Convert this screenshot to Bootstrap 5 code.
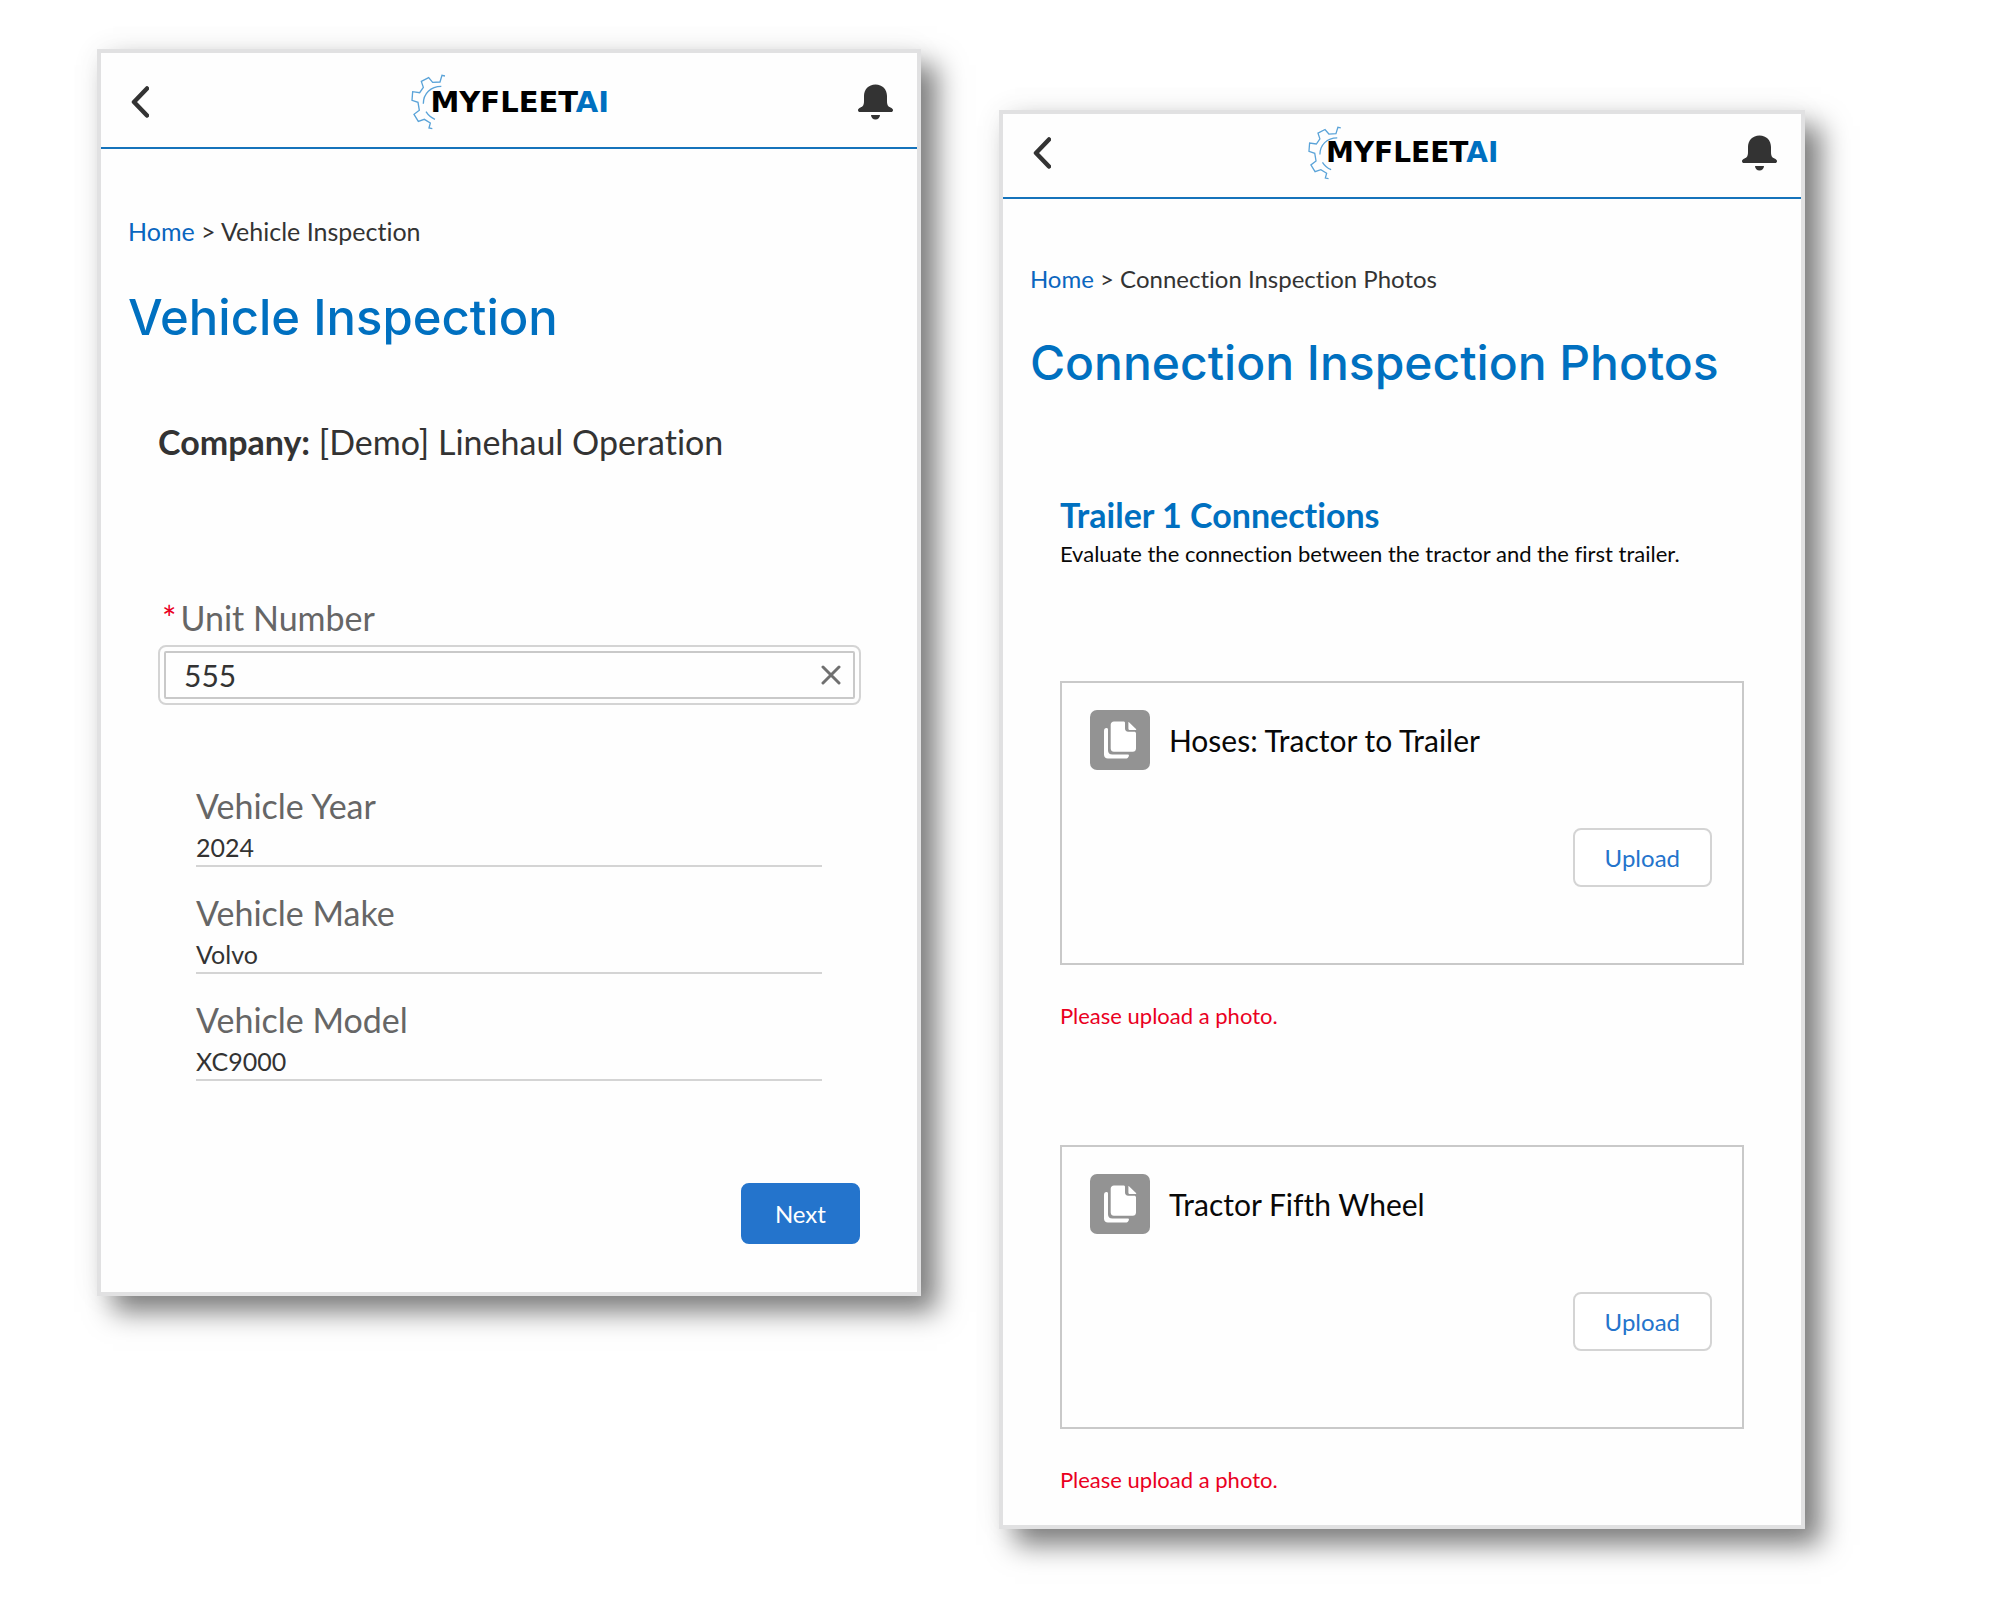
<!DOCTYPE html>
<html lang="en">
<head>
<meta charset="utf-8">
<meta name="viewport" content="width=device-width, initial-scale=1">
<title>MyFleetAI inspection screens</title>
<link href="https://cdn.jsdelivr.net/npm/bootstrap@5.3.0/dist/css/bootstrap.min.css" rel="stylesheet">
<style>
  body { font-family: Lato, "Liberation Sans", sans-serif; font-variant-ligatures: none; color: #333; background: #fff; }
  a { color: #0a66bf; text-decoration: none; }
  .stage { padding: 49px 195px 70px 97px; gap: 78px; }
  .screen { background: #fefefe; border: 4px solid #e1e1e2; box-shadow: 16px 16px 26px rgba(0,0,0,.5), 0 0 30px rgba(0,0,0,.05); min-width: 0; }
  .screen-vehicle { flex: 824 1 0; --crumb: 25px; --heading: 49px; --mark: 29px; --gear: 56px; }
  .screen-photos { flex: 806 1 0; margin-top: 61px; --crumb: 24px; --heading: 48px; --mark: 28px; --gear: 54px; }
  .topbar { height: 96px; padding: 4px 24px 0 30px; border-bottom: 2px solid #1573bb; }
  .screen-photos .topbar { height: 85px; padding-top: 0; padding-bottom: 6px; }
  .side { flex: 1 1 0; }
  .wordmark { font: 700 var(--mark)/1 "DejaVu Sans", sans-serif; color: #000; margin: 0 4px 0 -15px; }
  .wordmark span { color: #0070c0; }
  .gear { height: var(--gear); width: auto; }
  .content { padding: 67px 27px 48px; }
  .screen-photos .content { padding: 65px 27px 31px; }
  .crumbs { font-size: var(--crumb); line-height: 30px; margin-bottom: 43px; }
  .screen-photos .crumbs { margin-bottom: 40px; }
  .heading { font: 500 var(--heading)/58px Inter, sans-serif; color: #0070c0; margin: 0; white-space: nowrap; }
  .inset { padding: 0 30px; }
  .body-lg { font-size: 34px; line-height: 40px; }
  .company { margin: 75px 0 136px; }
  .field-label { color: #666; }
  .required { color: #ea001e; padding: 0 4px; }
  .ring { border: 2px solid #d4d4d4; border-radius: 8px; padding: 4px; margin: 7px -1px 81px 0; }
  .ring-inner { border: 2px solid #c9c9c9; border-radius: 2px; height: 48px; }
  .ring input { font-size: 30px; line-height: 40px; color: #333; padding: 0 18px; }
  .clear { padding: 0 12px; }
  .facts { padding: 0 38px; margin: 0 0 102px; }
  .facts dt { font-weight: 400; color: #666; margin-bottom: 6px; }
  .facts dd { font-size: 25px; line-height: 30px; padding-bottom: 3px; border-bottom: 2px solid #d4d4d4; margin: 0 0 26px; }
  .facts dd:last-child { margin-bottom: 0; }
  .action { font-size: 24px; line-height: 30px; border-radius: 8px; border-width: 2px; }
  .btn-next { --bs-btn-color: #fff; --bs-btn-bg: #2474cc; --bs-btn-border-color: #2474cc; height: 61px; padding: 0 32px; }
  .btn-upload { --bs-btn-color: #2474cc; --bs-btn-bg: #fff; --bs-btn-border-color: #d4d4d4; height: 59px; padding: 0 30px; }
  .section-title { font-size: 34px; line-height: 40px; color: #0070c0; margin: 103px 0 5px; }
  .note { font-size: 22px; line-height: 28px; color: #080808; margin: 0; }
  .upload-box { border: 2px solid #c9c9c9; padding: 27px 30px 76px 28px; margin-top: 115px; gap: 58px; }
  .note + .upload-box { margin-top: 113px; }
  .upload-box h3 { font-size: 30px; line-height: 36px; color: #080808; font-weight: 400; }
  .file-row { gap: 19px; }
  .photo-error { font-size: 22px; line-height: 28px; color: #ea001e; margin: 37px 0 0; }
  @media (max-width: 1500px) {
    .stage { flex-direction: column; padding: 32px; }
    .screen-vehicle, .screen-photos { flex: none; width: 100%; margin-top: 0; }
    .heading { white-space: normal; }
  }
</style>
<script src="https://cdn.jsdelivr.net/npm/bootstrap@5.3.0/dist/js/bootstrap.bundle.min.js"></script>
</head>
<body>
<svg class="d-none" aria-hidden="true">
  <symbol id="gear" viewBox="57 42 104 168">
    <path d="M159 48l-9-2-6 20-22 1-12-14-22 11 6 18-11 16-21-3-2 26 18 6 4 24-16 12 13 21 18-6 18 11-4 15 10 2M148 79c-32 0-54 22-54 52M102 155c7 11 15 18 27 23" fill="none" stroke="#5aa3d8" stroke-width="4"/>
  </symbol>
  <symbol id="back" viewBox="0 0 18 32">
    <path d="M16 2.500L3 16l13 13.500" fill="none" stroke="#333" stroke-width="4.500" stroke-linejoin="round" stroke-linecap="round"/>
  </symbol>
  <symbol id="bell" viewBox="0 0 35 36">
    <path d="M17.500 0.500C10.500 0.500 6 5.500 6 12v5c0 4-1 5.500-3.500 6.500C1 24.200 0 25 0 26.200 0 27.300.8 28 2 28h31c1.200 0 2-.7 2-1.800 0-1.200-1-2-2.500-2.700C30 22.500 29 21 29 17v-5C29 5.500 24.500.5 17.500.5zM13 31h9c0 2.600-2 4.500-4.500 4.500S13 33.600 13 31z" fill="#333"/>
  </symbol>
  <symbol id="files" viewBox="0 0 60 60">
    <rect width="60" height="60" rx="7" fill="#939393"/>
    <path d="M24 11.500h9.500c1 0 1.500.5 1.500 1.500v5.500c0 2 1.200 3.200 3.200 3.200h6c1 0 1.800.6 1.800 1.600V38.500c0 2-1.300 3.300-3.300 3.300H24c-2 0-3.300-1.300-3.300-3.300V14.800c0-2 1.300-3.300 3.300-3.300z" fill="#fff"/>
    <path d="M39 12.200l7 6.900c.5.500.2 1-.4 1H40c-1 0-1.600-.6-1.600-1.600v-6c0-.5.300-.6.600-.3z" fill="#fff"/>
    <path d="M16.500 18c1 0 1.500.6 1.500 1.500v20.700c0 2.800 1.500 4.400 4.400 4.400H37.600c1 0 1.500.5 1.300 1.300-.5 1.700-1.700 2.600-3.300 2.600H18c-2.500 0-4-1.400-4-3.800V21c0-1.800.8-3 2.500-3z" fill="#fff"/>
  </symbol>
</svg>

<main class="stage d-flex align-items-start">
  <section class="screen screen-vehicle">
    <header class="topbar d-flex align-items-center">
      <div class="side d-flex"><button class="btn p-0 border-0 d-flex" type="button" aria-label="Back"><svg width="18" height="32"><use href="#back"/></svg></button></div>
      <a class="d-flex align-items-center" href="#"><svg class="gear" viewBox="0 0 104 168"><use href="#gear" width="104" height="168"/></svg><span class="wordmark">MYFLEET<span>AI</span></span></a>
      <div class="side d-flex justify-content-end"><button class="btn p-0 border-0 d-flex" type="button" aria-label="Notifications"><svg width="35" height="36"><use href="#bell"/></svg></button></div>
    </header>
    <div class="content">
      <nav class="crumbs" aria-label="Breadcrumb"><a href="#">Home</a> &gt; Vehicle Inspection</nav>
      <h1 class="heading">Vehicle Inspection</h1>
      <div class="inset">
        <p class="company body-lg"><b>Company:</b> [Demo] Linehaul Operation</p>
        <label class="field-label body-lg d-block" for="unit"><span class="required">*</span>Unit Number</label>
        <div class="ring"><div class="ring-inner d-flex align-items-center">
          <input class="form-control border-0 shadow-none bg-transparent" id="unit" type="text" value="555">
          <button class="btn clear border-0 d-flex" type="button" aria-label="Clear"><svg width="20" height="20" viewBox="0 0 20 20"><path d="M2 2l16 16M18 2L2 18" stroke="#707070" stroke-width="3" stroke-linecap="round"/></svg></button>
        </div></div>
        <dl class="facts">
          <dt class="body-lg">Vehicle Year</dt><dd>2024</dd>
          <dt class="body-lg">Vehicle Make</dt><dd>Volvo</dd>
          <dt class="body-lg">Vehicle Model</dt><dd>XC9000</dd>
        </dl>
        <div class="d-flex justify-content-end"><button class="btn action btn-next" type="button">Next</button></div>
      </div>
    </div>
  </section>

  <section class="screen screen-photos">
    <header class="topbar d-flex align-items-center">
      <div class="side d-flex"><button class="btn p-0 border-0 d-flex" type="button" aria-label="Back"><svg width="18" height="32"><use href="#back"/></svg></button></div>
      <a class="d-flex align-items-center" href="#"><svg class="gear" viewBox="0 0 104 168"><use href="#gear" width="104" height="168"/></svg><span class="wordmark">MYFLEET<span>AI</span></span></a>
      <div class="side d-flex justify-content-end"><button class="btn p-0 border-0 d-flex" type="button" aria-label="Notifications"><svg width="35" height="36"><use href="#bell"/></svg></button></div>
    </header>
    <div class="content">
      <nav class="crumbs" aria-label="Breadcrumb"><a href="#">Home</a> &gt; Connection Inspection Photos</nav>
      <h1 class="heading">Connection Inspection Photos</h1>
      <div class="inset">
        <h2 class="section-title fw-bold">Trailer 1 Connections</h2>
        <p class="note">Evaluate the connection between the tractor and the first trailer.</p>
        <article class="upload-box d-flex flex-column">
          <div class="file-row d-flex align-items-center"><svg width="60" height="60"><use href="#files"/></svg><h3 class="m-0">Hoses: Tractor to Trailer</h3></div>
          <button class="btn action btn-upload align-self-end" type="button">Upload</button>
        </article>
        <p class="photo-error">Please upload a photo.</p>
        <article class="upload-box d-flex flex-column">
          <div class="file-row d-flex align-items-center"><svg width="60" height="60"><use href="#files"/></svg><h3 class="m-0">Tractor Fifth Wheel</h3></div>
          <button class="btn action btn-upload align-self-end" type="button">Upload</button>
        </article>
        <p class="photo-error">Please upload a photo.</p>
      </div>
    </div>
  </section>
</main>
</body>
</html>
